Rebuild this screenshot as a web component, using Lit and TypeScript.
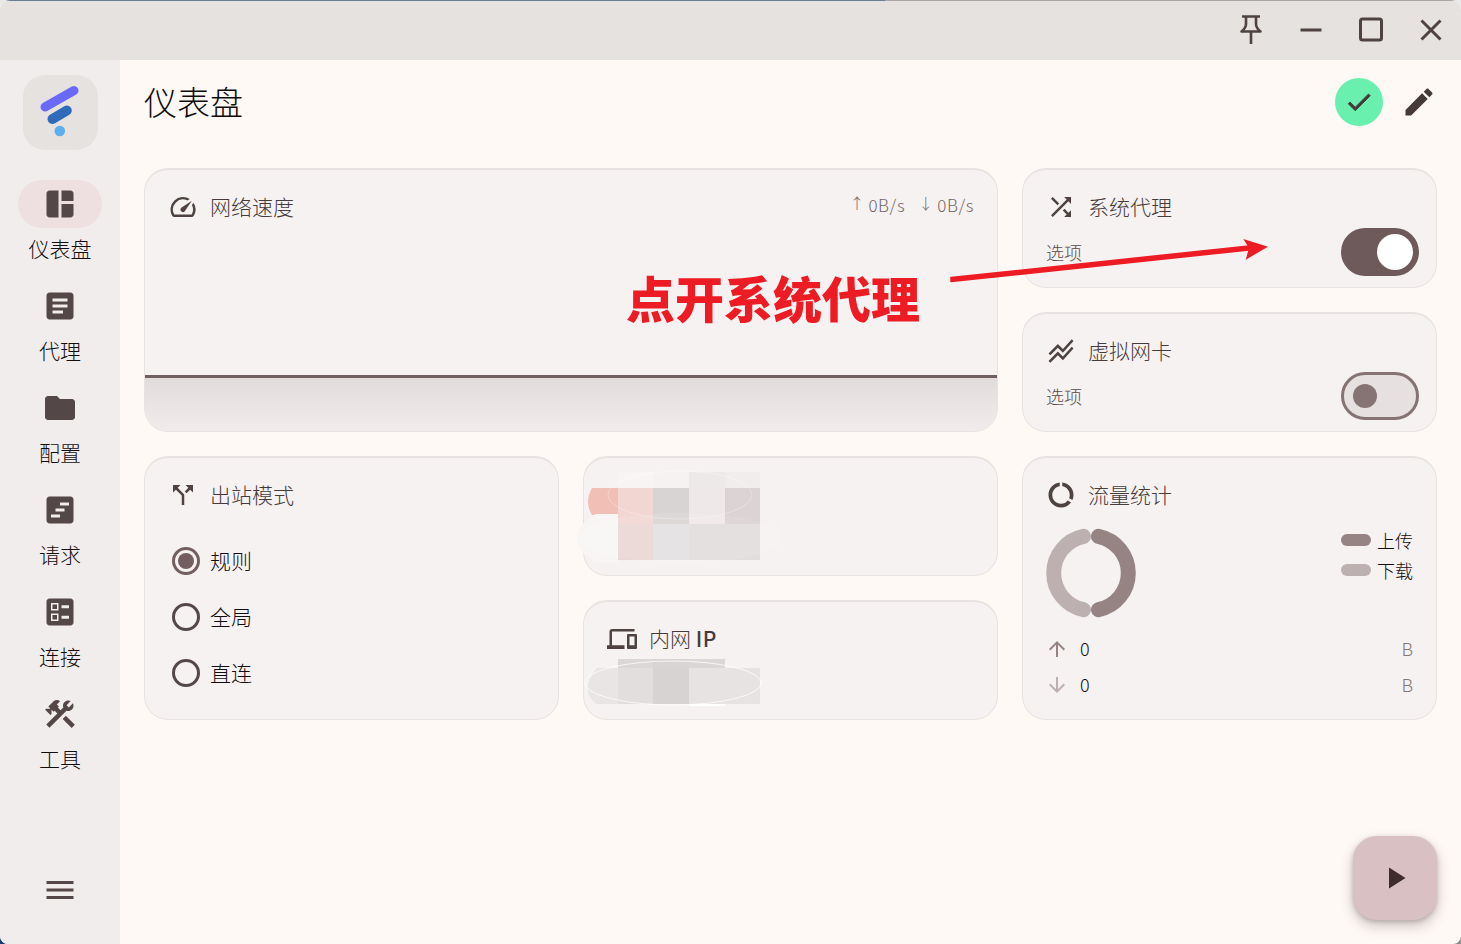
import { LitElement, html, css, svg } from 'lit';
import { customElement } from 'lit/decorators.js';

const ICONS: Record<string, string> = {
  dashboard: 'M11 21H5c-1.1 0-2-.9-2-2V5c0-1.1.9-2 2-2h6v18zm2 0h6c1.1 0 2-.9 2-2v-7h-8v9zm8-11V5c0-1.1-.9-2-2-2h-6v7h8z',
  article: 'M19 3H5c-1.1 0-2 .9-2 2v14c0 1.1.9 2 2 2h14c1.1 0 2-.9 2-2V5c0-1.1-.9-2-2-2zm-5 14H7v-2h7v2zm3-4H7v-2h10v2zm0-4H7V7h10v2z',
  folder: 'M10 4H4c-1.1 0-1.99.9-1.99 2L2 18c0 1.1.9 2 2 2h16c1.1 0 2-.9 2-2V8c0-1.1-.9-2-2-2h-8l-2-2z',
  timeline: 'M19 3H5c-1.1 0-2 .9-2 2v14c0 1.1.9 2 2 2h14c1.1 0 2-.9 2-2V5c0-1.1-.9-2-2-2zM12 7h6v2h-6zM9 11h6v2H9zM6 15h6v2H6z',
  ballot: 'M13 9.5h5v-2h-5v2zm0 7h5v-2h-5v2zm6 4.5H5c-1.1 0-2-.9-2-2V5c0-1.1.9-2 2-2h14c1.1 0 2 .9 2 2v14c0 1.1-.9 2-2 2zM6 11h5V6H6v5zm1-4h3v3H7V7zM6 18h5v-5H6v5zm1-4h3v3H7v-3z',
  tools: 'M13.78 15.3l6 6 2.11-2.16-6-6zM17.5 10c1.93 0 3.5-1.57 3.5-3.5 0-.58-.16-1.12-.41-1.6l-2.7 2.7-1.49-1.49 2.7-2.7c-.48-.25-1.02-.41-1.6-.41C15.57 3 14 4.57 14 6.5c0 .41.08.8.21 1.16l-1.85 1.85-1.78-1.78.71-.71-1.41-1.41L12 3.49c-1.17-1.17-3.07-1.17-4.24 0L4.22 7.03l1.41 1.41H2.81l-.71.71 3.54 3.54.71-.71V9.15l1.41 1.41.71-.71 1.78 1.78-7.41 7.41 2.12 2.12L16.34 9.79c.36.13.75.21 1.16.21z',
  menu: 'M3 18h18v-2H3v2zm0-5h18v-2H3v2zm0-7v2h18V6H3z',
  speed: 'M20.38 8.57l-1.23 1.85a8 8 0 0 1-.22 7.58H5.07A8 8 0 0 1 15.58 6.85l1.85-1.23A10 10 0 0 0 3.35 19a2 2 0 0 0 1.72 1h13.85a2 2 0 0 0 1.74-1 10 10 0 0 0-.27-10.44zm-9.79 6.84a2 2 0 0 0 2.83 0l5.66-8.49-8.49 5.66a2 2 0 0 0 0 2.83z',
  shuffle: 'M10.59 9.17L5.41 4 4 5.41l5.17 5.17 1.42-1.41zM14.5 4l2.04 2.04L4 18.59 5.41 20 17.96 7.46 20 9.5V4h-5.5zm.33 9.41l-1.41 1.41 3.13 3.13L14.5 20H20v-5.5l-2.04 2.04-3.13-3.13z',
  stacked: 'M2 19.99l7.5-7.51 4 4 7.09-7.97L22 9.92l-8.5 9.56-4-4-6 6.01-1.5-1.5zm1.5-4.5l6-6.01 4 4L22 3.92l-1.41-1.41-7.09 7.97-4-4L2 13.99l1.5 1.5z',
  split: 'M14 4l2.29 2.29-2.88 2.88 1.42 1.42 2.88-2.88L20 10V4zm-4 0H4v6l2.29-2.29 4.71 4.7V20h2v-8.41l-5.29-5.3z',
  usage: 'M13 2.05v3.03c3.39.49 6 3.39 6 6.92 0 .9-.18 1.75-.48 2.54l2.6 1.53c.56-1.24.88-2.62.88-4.07 0-5.18-3.95-9.45-9-9.95zM12 19c-3.87 0-7-3.13-7-7 0-3.53 2.61-6.43 6-6.92V2.05c-5.06.5-9 4.76-9 9.95 0 5.52 4.47 10 9.99 10 3.31 0 6.24-1.61 8.06-4.09l-2.6-1.53C16.17 17.98 14.21 19 12 19z',
  devices: 'M4 6h18V4H4c-1.1 0-2 .9-2 2v11H0v3h14v-3H4V6zm19 2h-6c-.55 0-1 .45-1 1v10c0 .55.45 1 1 1h6c.55 0 1-.45 1-1V9c0-.55-.45-1-1-1zm-1 9h-4v-7h4v7z',
  check: 'M9 16.17L4.83 12l-1.42 1.41L9 19 21 7l-1.41-1.41z',
  edit: 'M3 17.25V21h3.75L17.81 9.94l-3.75-3.75L3 17.25zM20.71 7.04c.39-.39.39-1.02 0-1.41l-2.34-2.34c-.39-.39-1.02-.39-1.41 0l-1.83 1.83 3.75 3.75 1.83-1.83z',
  up: 'M4 12l1.41 1.41L11 7.83V20h2V7.83l5.58 5.59L20 12l-8-8-8 8z',
  down: 'M20 12l-1.41-1.41L13 16.17V4h-2v12.17l-5.58-5.59L4 12l8 8 8-8z',
  play: 'M8 5v14l11-7z',
};

const icon = (name: string) => html`<svg viewBox="0 0 24 24" fill="currentColor" fill-rule="evenodd"><path d=${ICONS[name]}></path></svg>`;

const NAV = [
  { label: '仪表盘', icon: 'dashboard', active: true },
  { label: '代理', icon: 'article' },
  { label: '配置', icon: 'folder' },
  { label: '请求', icon: 'timeline' },
  { label: '连接', icon: 'ballot' },
  { label: '工具', icon: 'tools' },
];

// mosaic tiles of the blurred-out values, in page pixels: x, y, w, h, colour
const TILES_A: [number, number, number, number, string][] = [
  [618, 472, 35, 16, '#f8f4f4'], [653, 472, 36, 16, '#f6f2f2'], [689, 472, 36, 16, '#eee9e9'], [725, 472, 35, 16, '#f1eded'],
  [618, 488, 35, 36, '#f1d6d2'], [653, 488, 36, 36, '#d9d4d4'], [689, 488, 36, 36, '#efe8e8'], [725, 488, 35, 36, '#dbd3d4'],
  [618, 524, 35, 36, '#e9d6d4'], [653, 524, 36, 36, '#e3e0e0'], [689, 524, 71, 36, '#e2dddd'],
];
const TILES_B: [number, number, number, number, string][] = [
  [618, 659, 35, 9, '#dcd7d7'], [653, 659, 36, 9, '#d9d4d4'], [689, 659, 36, 9, '#dcd7d7'],
  [618, 668, 35, 36, '#e2dede'], [653, 668, 36, 36, '#d8d3d3'], [689, 668, 71, 36, '#e7e3e3'],
];

@customElement('app-root')
export class AppRoot extends LitElement {
  static styles = css`
    :host {
      display: block;
      background: linear-gradient(90deg, #1d3a70, #8a8a8a) bottom / 100% 20px no-repeat, #e9e9e9;
      font-family: "Noto Sans CJK SC", "Noto Sans", sans-serif;
      font-weight: 300;
      color: #1f1a1a;
    }

    svg { display: block; }

    .window {
      position: relative;
      height: 944px;
      display: flex;
      flex-direction: column;
      overflow: hidden;
      border-radius: 10px 10px 8px 8px;
      background: #fff9f6;
    }
    .edge {
      position: absolute;
      left: 0;
      right: 0;
      top: 0;
      height: 1px;
      background: linear-gradient(90deg, #6b7c99 0, #6b7c99 885px, #a9a7a6 885px);
    }

    /* Title bar */
    .titlebar {
      height: 60px;
      flex: none;
      display: flex;
      justify-content: flex-end;
      background: #e6e2df;
    }
    .winbtn {
      width: 60px;
      display: flex;
      align-items: center;
      justify-content: center;
    }
    .winbtn svg {
      width: 32px;
      height: 32px;
      fill: none;
      stroke: #4f4342;
      stroke-width: 3;
    }
    .winbtn svg.pin { stroke-linejoin: round; stroke-width: 2.6; }

    .body {
      flex: 1;
      display: flex;
      min-height: 0;
    }

    /* Nav rail */
    .rail {
      width: 120px;
      flex: none;
      display: flex;
      flex-direction: column;
      align-items: center;
      padding: 15px 0 36px;
      box-sizing: border-box;
      background: #f2eded;
    }
    .logo {
      width: 75px;
      height: 75px;
      margin-bottom: 30px;
      border-radius: 22px;
      background: #e6e2e0;
    }
    .nav {
      display: flex;
      flex-direction: column;
      align-items: center;
      height: 102px;
      width: 100%;
    }
    .pill {
      width: 84px;
      height: 48px;
      border-radius: 24px;
      display: flex;
      align-items: center;
      justify-content: center;
      color: #544747;
    }
    .pill svg { width: 36px; height: 36px; }
    .nav.active .pill { background: #eee0e0; }
    .nav span {
      margin-top: 5px;
      font-size: 21px;
      line-height: 30px;
      color: #120e0e;
    }
    .menu {
      margin-top: auto;
      width: 36px;
      height: 36px;
      color: #544747;
    }

    /* Content */
    .main {
      flex: 1;
      min-width: 0;
      padding: 18px 24px 0;
    }
    .header {
      display: flex;
      align-items: center;
      height: 48px;
      margin: 0 -6px 42px 0;
      gap: 12px;
    }
    .header h1 {
      flex: 1;
      margin: 0 0 2px;
      font-size: 33px;
      line-height: 44px;
      font-weight: 300;
      color: #0f0b0b;
    }
    .status {
      width: 48px;
      height: 48px;
      border-radius: 50%;
      background: #69f0ae;
      color: #45393a;
      display: flex;
      align-items: center;
      justify-content: center;
    }
    .status svg { width: 30px; height: 30px; stroke: currentColor; stroke-width: 0.7; }
    .edit {
      width: 48px;
      height: 48px;
      color: #45393a;
      display: flex;
      align-items: center;
      justify-content: center;
    }
    .edit svg { width: 36px; height: 36px; }

    .grid {
      display: grid;
      grid-template-columns: repeat(6, 1fr);
      grid-auto-rows: 120px;
      gap: 24px;
    }
    .card {
      position: relative;
      box-sizing: border-box;
      padding: 22px 23px 11px;
      display: flex;
      flex-direction: column;
      border: 1px solid #e8e2e1;
      border-top-width: 2px;
      border-radius: 24px;
      background: #f7f2f2;
    }
    .wide { grid-column: span 4; }
    .tall { grid-row: span 2; }
    .half { grid-column: span 2; }

    .head {
      display: flex;
      align-items: center;
      height: 30px;
      flex: none;
      gap: 12px;
      font-size: 21px;
      color: #463b3b;
    }
    .head > span { margin-bottom: 2px; }
    .head svg {
      width: 30px;
      height: 30px;
      flex: none;
      color: #4f4342;
    }
    .head .grow { flex: 1; }
    .head .ip { font-weight: 500; letter-spacing: 0.5px; }
    .rate {
      display: flex;
      gap: 16px;
      margin-top: -6px;
      font-size: 17px;
      letter-spacing: 0.6px;
      color: #6f6565;
    }
    .rate span { display: flex; gap: 7px; }
    .rate i {
      display: flex;
      justify-content: center;
      width: 9px;
      font-style: normal;
      font-size: 15px;
      letter-spacing: 0;
    }

    /* Speed chart */
    .speed { overflow: hidden; }
    .chart {
      position: absolute;
      left: 0;
      right: 0;
      bottom: 0;
      height: 53px;
      border-top: 3px solid #6f5f5f;
      background: linear-gradient(#e2dbdb, #f1ecec);
    }

    /* Switch cards */
    .row {
      flex: 1;
      display: flex;
      align-items: flex-end;
      justify-content: space-between;
      margin-right: -6px;
    }
    .row small {
      font-size: 18px;
      line-height: 24px;
      margin-bottom: 12px;
      color: #574c4b;
    }
    .switch {
      box-sizing: border-box;
      width: 78px;
      height: 48px;
      border-radius: 24px;
      display: flex;
      align-items: center;
    }
    .switch i { display: block; border-radius: 50%; }
    .switch.on {
      justify-content: flex-end;
      padding-right: 6px;
      background: #6e5a5b;
    }
    .switch.on i { width: 36px; height: 36px; background: #fff; }
    .switch.off {
      padding-left: 9px;
      border: 3px solid #857473;
      background: #e6e1e0;
    }
    .switch.off i { width: 24px; height: 24px; background: #857473; }

    /* Outbound mode */
    .radios {
      display: flex;
      flex-direction: column;
      margin-top: 23px;
    }
    .radio {
      display: flex;
      align-items: center;
      height: 56px;
      gap: 10px;
      font-size: 21px;
      color: #120e0e;
    }
    .radio span { margin-bottom: 3px; }
    .radio b {
      box-sizing: border-box;
      width: 28px;
      height: 28px;
      border: 3px solid #55484a;
      border-radius: 50%;
      display: flex;
      align-items: center;
      justify-content: center;
      margin-left: 4px;
    }
    .radio.sel b { border-color: #745f60; }
    .radio.sel b::after {
      content: '';
      width: 16px;
      height: 16px;
      border-radius: 50%;
      background: #745f60;
    }

    .blot {
      position: absolute;
      left: -9px;
      top: 10px;
      width: 220px;
      height: 110px;
      overflow: visible;
      pointer-events: none;
    }

    /* Traffic */
    .donut-row {
      display: flex;
      justify-content: space-between;
      margin-top: 18px;
      height: 90px;
    }
    .donut-row > svg { width: 90px; height: 90px; }
    .legend {
      display: flex;
      flex-direction: column;
      gap: 6px;
      margin: 0 0 0 0;
      font-size: 18px;
      line-height: 24px;
      color: #120e0e;
    }
    .legend div {
      display: flex;
      align-items: center;
      gap: 6px;
    }
    .legend i {
      width: 30px;
      height: 12px;
      border-radius: 6px;
    }
    .legend .sw-up { background: #968485; }
    .legend .sw-down { background: #bdb0b0; }
    .stat {
      display: flex;
      align-items: center;
      height: 36px;
      font-size: 18px;
      color: #120e0e;
    }
    .stats { margin-top: 13px; }
    .stat svg { width: 24px; height: 24px; margin-left: -1px; }
    .stat span { margin: 0 0 2px 11px; flex: 1; }
    .stat em { margin-bottom: 2px; font-style: normal; color: #857778; }
    .c-up { color: #968485; }
    .c-down { color: #bdb0b0; }

    /* Red annotation over the screenshot */
    .note {
      position: absolute;
      left: 626px;
      top: 262px;
      font-size: 49px;
      line-height: 70px;
      font-weight: 900;
      color: #ed1c24;
      white-space: nowrap;
    }
    .arrow {
      position: absolute;
      left: 0;
      top: 0;
      width: 1461px;
      height: 944px;
      pointer-events: none;
    }

    .fab {
      position: absolute;
      right: 24px;
      bottom: 24px;
      width: 84px;
      height: 84px;
      border-radius: 24px;
      background: #d9c0c2;
      color: #3f2c2e;
      display: flex;
      align-items: center;
      justify-content: center;
      box-shadow: 0 6px 12px 2px rgba(70, 50, 50, 0.2), 0 2px 4px rgba(70, 50, 50, 0.25);
    }
    .fab svg { width: 36px; height: 36px; }
  `;

  private head(name: string, label: unknown) {
    return html`<div class="head">${icon(name)}<span>${label}</span></div>`;
  }

  private blot(ox: number, oy: number, tiles: [number, number, number, number, string][], extra: unknown) {
    return html`<svg class="blot" viewBox="0 0 220 110">
      <g transform="translate(${-ox} ${-oy})">
        ${tiles.map(([x, y, w, h, c]) => svg`<rect x=${x} y=${y} width=${w} height=${h} fill=${c}></rect>`)}
        ${extra}
      </g>
    </svg>`;
  }

  render() {
    return html`
      <div class="window">
        <div class="titlebar">
          <div class="winbtn">
            <svg class="pin" viewBox="0 0 32 32"><path d="M7 2.500h18M11 2.500V10q0 4-4.500 7.500h19q-4.500-3.500-4.500-7.500V2.500M16 17.500V30"></path></svg>
          </div>
          <div class="winbtn">
            <svg viewBox="0 0 32 32"><path d="M5.500 16h21"></path></svg>
          </div>
          <div class="winbtn">
            <svg viewBox="0 0 32 32"><rect x="5.500" y="5" width="21" height="21" rx="2"></rect></svg>
          </div>
          <div class="winbtn">
            <svg viewBox="0 0 32 32"><path d="M6.500 6.500l19 19M25.500 6.500l-19 19"></path></svg>
          </div>
        </div>

        <div class="body">
          <aside class="rail">
            <div class="logo">
              <svg viewBox="0 0 75 75" width="75" height="75" fill="none" stroke-linecap="round">
                <path d="M22 32L51 15.500" stroke="#6b69fb" stroke-width="9"></path>
                <path d="M29.500 44L43.800 35.500" stroke="#2f6bb8" stroke-width="10"></path>
                <circle cx="36.800" cy="56" r="5.300" fill="#5caeef"></circle>
              </svg>
            </div>
            ${NAV.map(
              (n) => html`<div class="nav ${n.active ? 'active' : ''}">
                <div class="pill">${icon(n.icon)}</div>
                <span>${n.label}</span>
              </div>`
            )}
            <div class="menu">${icon('menu')}</div>
          </aside>

          <main class="main">
            <div class="header">
              <h1>仪表盘</h1>
              <div class="status">${icon('check')}</div>
              <div class="edit">${icon('edit')}</div>
            </div>

            <div class="grid">
              <section class="card wide tall speed">
                <div class="head">
                  ${icon('speed')}<span class="grow">网络速度</span>
                  <div class="rate"><span><i>↑</i>0B/s</span><span><i>↓</i>0B/s</span></div>
                </div>
                <div class="chart"></div>
              </section>

              <section class="card half">
                ${this.head('shuffle', '系统代理')}
                <div class="row"><small>选项</small><div class="switch on"><i></i></div></div>
              </section>

              <section class="card half">
                ${this.head('stacked', '虚拟网卡')}
                <div class="row"><small>选项</small><div class="switch off"><i></i></div></div>
              </section>

              <section class="card half tall">
                ${this.head('split', '出站模式')}
                <div class="radios">
                  <div class="radio sel"><b></b><span>规则</span></div>
                  <div class="radio"><b></b><span>全局</span></div>
                  <div class="radio"><b></b><span>直连</span></div>
                </div>
              </section>

              <section class="card half">
                ${this.blot(575, 468, TILES_A, svg`
                  <path d="M618 488H592Q584 502 592 515H618Z" fill="#f2bfb6"></path>
                  <path d="M618 514H596Q577 525 577 538Q577 552 596 562H618Z" fill="#f9f5f5"></path>
                  <ellipse cx="680" cy="538" rx="103" ry="25" fill="#fff" fill-opacity=".1"></ellipse>
                  <ellipse cx="680" cy="495" rx="72" ry="24" fill="none" stroke="#fff" stroke-opacity=".3"></ellipse>
                `)}
              </section>

              <section class="card half tall">
                ${this.head('usage', '流量统计')}
                <div class="donut-row">
                  <svg viewBox="0 0 90 90" fill="none" stroke-width="15" stroke-linecap="round">
                    <path d="M52.500 8.300A37.500 37.500 0 0 1 52.500 81.700" stroke="#968485"></path>
                    <path d="M37.500 81.700A37.500 37.500 0 0 1 37.500 8.300" stroke="#bdb0b0"></path>
                  </svg>
                  <div class="legend">
                    <div><i class="sw-up"></i>上传</div>
                    <div><i class="sw-down"></i>下载</div>
                  </div>
                </div>
                <div class="stats">
                  <div class="stat"><svg class="c-up" viewBox="0 0 24 24" fill="currentColor"><path d=${ICONS.up}></path></svg><span>0</span><em>B</em></div>
                  <div class="stat"><svg class="c-down" viewBox="0 0 24 24" fill="currentColor"><path d=${ICONS.down}></path></svg><span>0</span><em>B</em></div>
                </div>
              </section>

              <section class="card half">
                ${this.head('devices', html`内网 <span class="ip">IP</span>`)}
                ${this.blot(575, 612, TILES_B, svg`
                  <path d="M618 668H597Q586 680 588 692Q590 700 597 704H618Z" fill="#e9e5e5"></path>
                  <path d="M725 668H760V693Q755 704 745 704H725Z" fill="#e7e3e3"></path>
                  <ellipse cx="673" cy="683" rx="88" ry="22" fill="none" stroke="#fff" stroke-opacity=".75"></ellipse>
                  <rect x="689" y="704" width="36" height="2" fill="#fff"></rect>
                `)}
              </section>
            </div>
          </main>
        </div>

        <div class="note">点开系统代理</div>
        <svg class="arrow" viewBox="0 0 1461 944" fill="#ed1c24">
          <path d="M951 281.500L1249 250L1249 246L951 277.500Z" stroke="#ed1c24" stroke-width="1.500" stroke-linejoin="round"></path>
          <path d="M1268 246.700L1243.300 239L1249 248L1245.700 259.700Z"></path>
        </svg>

        <div class="fab">${icon('play')}</div>
        <div class="edge"></div>
      </div>
    `;
  }
}
